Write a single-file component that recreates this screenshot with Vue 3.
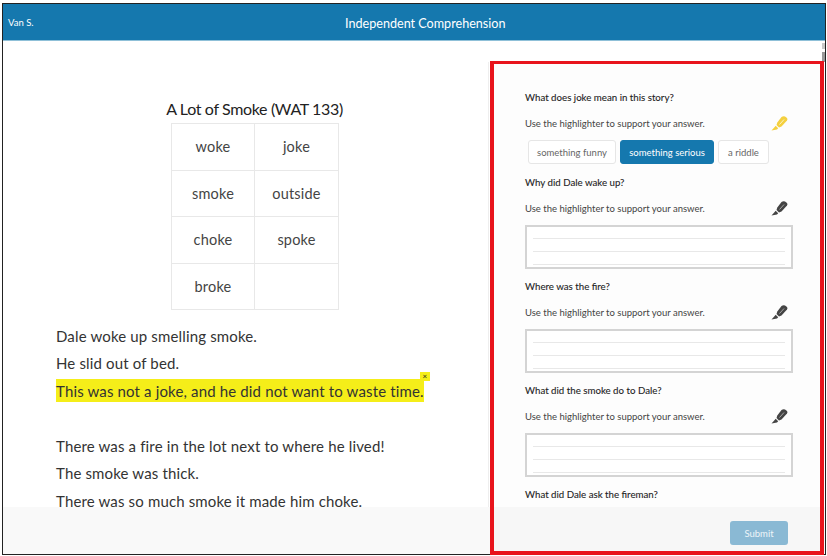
<script setup>
const words = ['woke', 'joke', 'smoke', 'outside', 'choke', 'spoke', 'broke', '']
const questions = [
  { q: 'Why did Dale wake up?' },
  { q: 'Where was the fire?' },
  { q: 'What did the smoke do to Dale?' }
]
const body = 'M10.5 1 Q12 0 14 .5 L16 2 Q17 3 16 4.5 L10.5 10.5 L8 11.5 L5.5 9 L6.3 6.5 Z'
const tip = 'M4.7 9.8 L7.2 12.2 L6 13.5 L.5 14.5 L3.2 11.5 Z'
</script>

<template>
  <div class="page">
    <div class="frame">
      <header class="bar">
        <span class="user">Van S.</span>
        <span class="title">Independent Comprehension</span>
      </header>
      <div class="body">
        <main class="story">
          <h1>A Lot of Smoke (WAT 133)</h1>
          <div class="words">
            <div v-for="(w, i) in words" :key="i" class="cell">{{ w }}</div>
          </div>
          <div class="text">
            <p>Dale woke up smelling smoke.</p>
            <p>He slid out of bed.</p>
            <p><span class="hl">This was not a joke, and he did not want to waste time.<i class="x">×</i></span></p>
            <p class="gap">There was a fire in the lot next to where he lived!</p>
            <p>The smoke was thick.</p>
            <p>There was so much smoke it made him choke.</p>
          </div>
        </main>
        <aside class="panel">
          <div class="scroll">
            <h2>What does joke mean in this story?</h2>
            <div class="use">
              <span>Use the highlighter to support your answer.</span>
              <svg viewBox="0 0 17 15" width="17" height="15" fill="#f4d03f"><path :d="body" /><path :d="tip" /><path d="M8.5 8.5 L13 3.5" stroke="#fdf3c4" stroke-width="1" /></svg>
            </div>
            <div class="choices">
              <button class="choice">something funny</button>
              <button class="choice on">something serious</button>
              <button class="choice">a riddle</button>
            </div>
            <section v-for="item in questions" :key="item.q" class="q">
              <h2>{{ item.q }}</h2>
              <div class="use">
                <span>Use the highlighter to support your answer.</span>
                <svg viewBox="0 0 17 15" width="17" height="15" fill="#444"><path :d="body" /><path :d="tip" /><path d="M8.5 8.5 L13 3.5" stroke="#a8a8a8" stroke-width="1" /></svg>
              </div>
              <div class="answer"><i></i><i></i><i></i></div>
            </section>
            <h2 class="last">What did Dale ask the fireman?</h2>
          </div>
          <div class="foot"><button class="submit">Submit</button></div>
        </aside>
      </div>
      <div class="strip"></div>
      <div class="sb"></div>
    </div>
  </div>
</template>

<style>
html, body { margin: 0; background: #fff; overflow: hidden; }
</style>

<style scoped>
.page {
  width: 827px;
  height: 556px;
  box-sizing: border-box;
  padding: 3px 1px 1px 2px;
  background: #fff;
}
.frame {
  position: relative;
  box-sizing: border-box;
  height: 100%;
  border: 1px solid #222;
  background: #fff;
  font-family: Lato, "Noto Sans", sans-serif;
  color: #333;
  display: flex;
  flex-direction: column;
}
.bar {
  flex: none;
  height: 37px;
  background: #1578ae;
  border-bottom: 1px solid #8fc0d8;
  box-sizing: border-box;
  display: grid;
  grid-template-columns: 337px auto;
  align-items: center;
  color: #fff;
  padding: 0 0 0 5px;
}
.user { font-size: 9.5px; }
.title {
  font-size: 14px;
  display: inline-block;
  transform: scaleX(.9);
  transform-origin: left center;
  white-space: nowrap;
}
.body { flex: 1; min-height: 0; display: flex; }
.story {
  position: relative;
  width: 486px;
  flex: none;
  box-sizing: border-box;
  overflow: hidden;
}
.story::after {
  content: "";
  position: absolute;
  top: 21px;
  right: 0;
  bottom: 0;
  width: 1px;
  background: #eee;
}
h1 {
  margin: 58px 0 0;
  padding-left: 17px;
  font-size: 16px;
  letter-spacing: -.35px;
  font-weight: 400;
  line-height: 20px;
  text-align: center;
  color: #222;
}
.words {
  margin: 4px 0 0 168px;
  width: 167px;
  display: grid;
  grid-template-columns: 83px 84px;
  border: 1px solid #e8e8e8;
  border-width: 1px 0 0 1px;
}
.cell {
  height: 46.5px;
  box-sizing: border-box;
  border: 1px solid #e8e8e8;
  border-width: 0 1px 1px 0;
  display: flex;
  align-items: center;
  justify-content: center;
  font-size: 14.5px;
  letter-spacing: .2px;
  color: #444;
}
.text { margin: 13px 0 0 53px; font-size: 15px; letter-spacing: .15px; color: #333; }
.text p { margin: 0; height: 27.4px; line-height: 27.4px; white-space: nowrap; }
.text .gap { margin-top: 27.8px; }
.hl { position: relative; background: #f5ee19; padding: 3px 0 2px; }
.x {
  position: absolute;
  right: -6px;
  top: -7px;
  width: 10px;
  height: 9px;
  background: #f5ee19;
  font-style: normal;
  font-size: 8px;
  line-height: 9px;
  text-align: center;
  color: #222;
}
.panel {
  position: relative;
  z-index: 2;
  margin: 20px 0 -1px 1px;
  flex: none;
  width: 334px;
  box-sizing: border-box;
  border: 4px solid #e8141c;
  border-top-width: 3px;
  display: flex;
  flex-direction: column;
  background: #fdfdfd;
}
.scroll { flex: 1; min-height: 0; overflow: hidden; padding: 26px 27px 0 31px; }
h2 {
  margin: 0;
  font-size: 9.7px;
  font-weight: 400;
  line-height: 14px;
  color: #222;
  -webkit-text-stroke: .1px #222;
}
.use {
  display: flex;
  justify-content: space-between;
  align-items: center;
  margin-top: 10px;
  height: 18px;
  font-size: 9.5px;
  color: #444;
  padding-right: 5px;
}
.choices { display: flex; gap: 4px; margin: 8px 0 0 3px; }
.choice {
  width: 88px;
  height: 24px;
  padding: 0;
  border: 1px solid #e6e6e6;
  border-radius: 3px;
  background: #fff;
  color: #666;
  font: inherit;
  font-size: 9.5px;
  box-sizing: border-box;
}
.choice.on { width: 94px; background: #1578ae; border-color: #1578ae; color: #fff; }
.choice:last-child { width: 51px; }
.q { margin-top: 11px; }
.q + .q { margin-top: 10px; }
.answer {
  margin-top: 8px;
  height: 44px;
  box-sizing: border-box;
  border: 2px solid #d4d4d4;
  background: #fff;
  padding: 11px 6px 0;
  display: flex;
  flex-direction: column;
  gap: 12px;
}
.answer i { display: block; height: 1px; background: #e8e8e8; flex: none; }
.last { margin-top: 10px; }
.foot {
  flex: none;
  height: 44px;
  box-sizing: border-box;
  background: #f7f7f7;
  display: flex;
  align-items: flex-end;
  justify-content: flex-end;
  padding: 0 32px 6px 0;
}
.submit {
  width: 58px;
  height: 24px;
  border: 0;
  border-radius: 3px;
  background: #8ab9d4;
  color: #eef5f9;
  font: inherit;
  font-size: 9.5px;
}
.strip {
  position: absolute;
  left: 0;
  right: 0;
  bottom: 0;
  height: 47px;
  background: #f9f9f9;
  z-index: 1;
}
.sb {
  position: absolute;
  right: 0;
  top: 39px;
  width: 3px;
  height: 19px;
  background: linear-gradient(#c8c8c8 0 30%, #fff 30% 45%, #999 45%);
}
</style>
